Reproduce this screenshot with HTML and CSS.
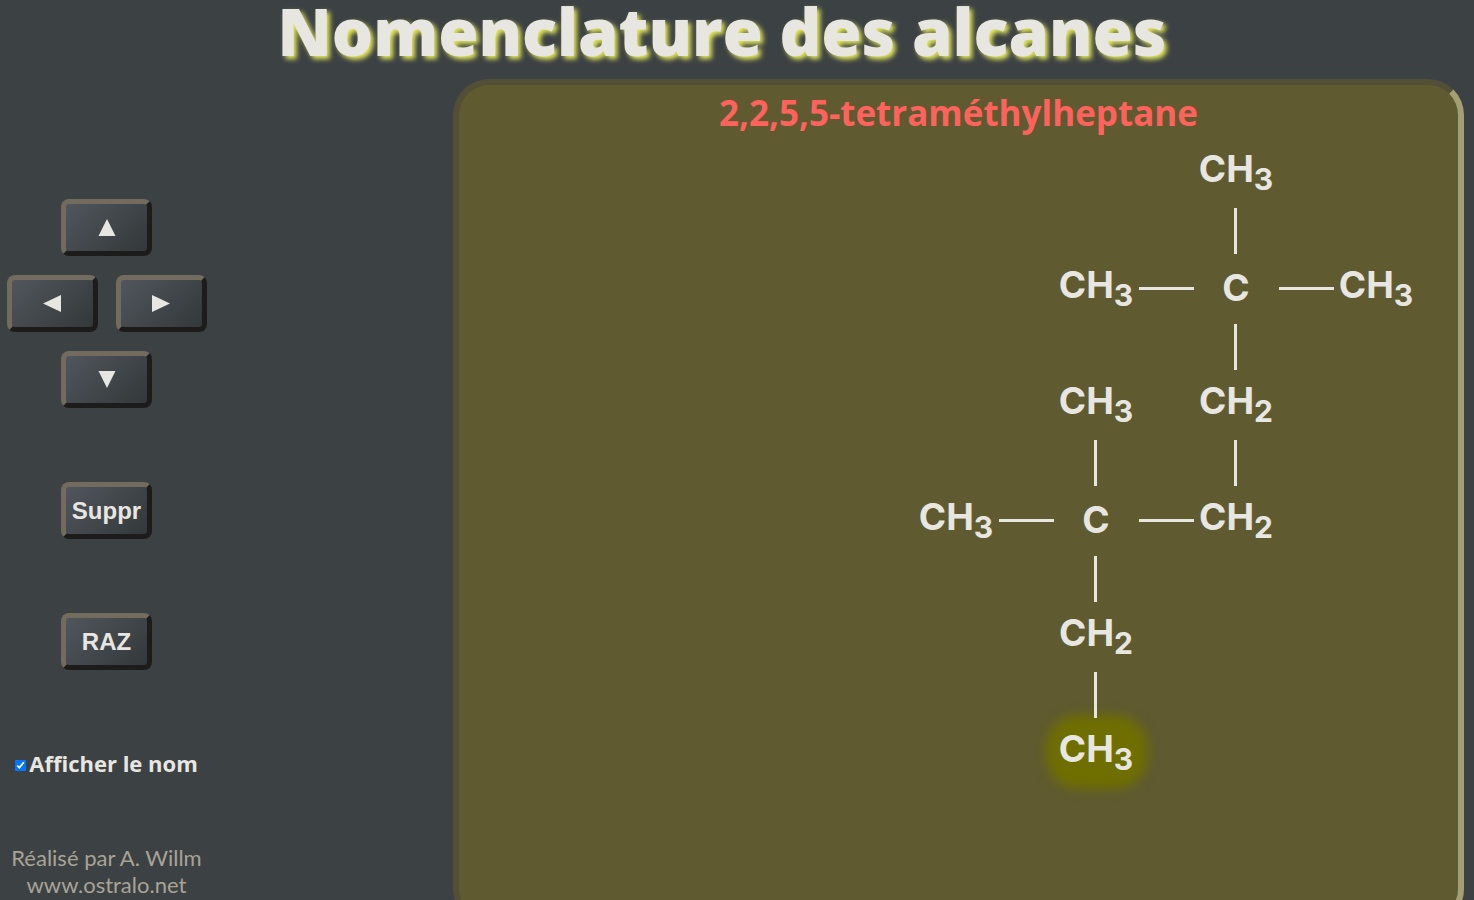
FILE: index.html
```html
<!DOCTYPE html>
<html lang="fr">
<head>
<meta charset="utf-8">
<title>Nomenclature des alcanes</title>
<link rel="stylesheet" href="styles.css">
</head>
<body>
<h1 class="title">Nomenclature des alcanes</h1>
<main class="layout">
  <div class="controls">
    <div class="pad">
      <button class="key up" type="button" aria-label="Haut"><svg viewBox="0 0 18 18"><path d="M9 0L17.500 17H.5Z"/></svg></button>
      <button class="key left" type="button" aria-label="Gauche"><svg viewBox="0 0 18 18"><path d="M0 8.500L18 0V17Z"/></svg></button>
      <button class="key right" type="button" aria-label="Droite"><svg viewBox="0 0 18 18"><path d="M18 8.500L0 0V17Z"/></svg></button>
      <button class="key down" type="button" aria-label="Bas"><svg viewBox="0 0 18 18"><path d="M9 17L17.500 0H.5Z"/></svg></button>
    </div>
    <button class="key action" type="button">Suppr</button>
    <button class="key action" type="button">RAZ</button>
    <label class="show-name" for="show-name"><input class="check" id="show-name" type="checkbox" checked>Afficher le nom</label>
    <p class="credits">Réalisé par A. Willm<br>www.ostralo.net</p>
  </div>
  <section class="board">
    <h2 class="name">2,2,5,5-tetraméthylheptane</h2>
    <div class="molecule">
      <span class="atom x11 y1">CH<sub>3</sub></span>
      <span class="bond-v x11 y2"></span>
      <span class="atom x9 y3">CH<sub>3</sub></span>
      <span class="bond-h x10 y3"></span>
      <span class="atom single x11 y3">C</span>
      <span class="bond-h x12 y3"></span>
      <span class="atom x13 y3">CH<sub>3</sub></span>
      <span class="bond-v x11 y4"></span>
      <span class="atom x9 y5">CH<sub>3</sub></span>
      <span class="atom x11 y5">CH<sub>2</sub></span>
      <span class="bond-v x9 y6"></span>
      <span class="bond-v x11 y6"></span>
      <span class="atom x7 y7">CH<sub>3</sub></span>
      <span class="bond-h x8 y7"></span>
      <span class="atom single x9 y7">C</span>
      <span class="bond-h x10 y7"></span>
      <span class="atom x11 y7">CH<sub>2</sub></span>
      <span class="bond-v x9 y8"></span>
      <span class="atom x9 y9">CH<sub>2</sub></span>
      <span class="bond-v x9 y10"></span>
      <span class="atom selected x9 y11">CH<sub>3</sub></span>
    </div>
  </section>
</main>
</body>
</html>
```
FILE: styles.css
```css
* { box-sizing: border-box; }
body {
  margin: 0;
  height: 100vh;
  overflow: hidden;
  background: #3c4144;
  color: #e8e6e1;
  font-family: "Open Sans", sans-serif;
}
.title {
  margin: 0;
  padding: 0 30px 17px 0;
  text-align: center;
  font-size: 65px;
  font-weight: 800;
  line-height: 62px;
  text-shadow: 3px 3px 5px #e6ea5c;
}
.layout {
  display: grid;
  grid-template-columns: 213px minmax(0, 1fr);
  column-gap: 240px;
  padding-right: 10px;
}
.controls {
  display: flex;
  flex-direction: column;
  align-items: center;
  padding-top: 120px;
}
.pad {
  display: grid;
  grid-template-columns: 91px 91px;
  gap: 19px 18px;
}
.up, .down { grid-column: 1 / 3; justify-self: center; }
.key {
  display: flex;
  align-items: center;
  justify-content: center;
  width: 91px;
  height: 57px;
  padding: 0;
  border: 5px solid;
  border-color: #736b5e #1d1c1a #1d1c1a #736b5e;
  border-radius: 8px;
  background: linear-gradient(135deg, #50565c, #33383a);
  color: #e8e6e1;
  font: bold 24px/28px "Liberation Sans", Arial, sans-serif;
}
.key svg { width: 18px; height: 18px; fill: currentColor; }
.action { margin-top: 74px; }
.show-name {
  display: flex;
  align-items: center;
  gap: 3px;
  margin-top: 78px;
  font-size: 22px;
  font-weight: 700;
  line-height: 30px;
  white-space: nowrap;
}
.check { width: 11px; height: 11px; margin: 4px 0 0; }
.credits {
  margin: 66px 0 0;
  color: #a9a397;
  font-family: Lato, sans-serif;
  font-size: 22px;
  line-height: 27px;
  text-align: center;
}
.board {
  height: 846px;
  border: 6px solid;
  border-color: #534e36 #a49e74 #a49e74 #534e36;
  border-radius: 36px;
  background: #5f5a30;
}
.name {
  margin: 0;
  color: #ff625c;
  font-size: 35px;
  font-weight: 700;
  line-height: 56px;
  padding-bottom: 2px;
  text-align: center;
}
.molecule {
  display: grid;
  grid-template-columns: repeat(13, 70px);
  grid-template-rows: repeat(11, 58px);
  justify-content: center;
  place-items: center;
  padding-right: 5px;
}
.atom {
  display: flex;
  align-items: baseline;
  justify-content: center;
  width: 77px;
  height: 50px;
  font-family: Inter, sans-serif;
  font-size: 37px;
  font-weight: 700;
  line-height: 44px;
}
.atom sub { position: relative; top: 8px; font-size: 30px; line-height: 1; vertical-align: baseline; }
.single { padding-top: 3px; }
.selected { border-radius: 20px; background: #6f6f00; box-shadow: 0 0 12px 12px #6f6f00; }
.bond-v, .bond-h { z-index: 1; background: #e8e6e1; }
.bond-v { width: 3px; height: 46px; margin: 2px 2px 0 0; }
.bond-h { width: 55px; height: 3px; }
.x7 { grid-column: 7; } .x8 { grid-column: 8; } .x9 { grid-column: 9; }
.x10 { grid-column: 10; } .x11 { grid-column: 11; } .x12 { grid-column: 12; } .x13 { grid-column: 13; }
.y1 { grid-row: 1; } .y2 { grid-row: 2; } .y3 { grid-row: 3; } .y4 { grid-row: 4; }
.y5 { grid-row: 5; } .y6 { grid-row: 6; } .y7 { grid-row: 7; } .y8 { grid-row: 8; }
.y9 { grid-row: 9; } .y10 { grid-row: 10; } .y11 { grid-row: 11; }
```
